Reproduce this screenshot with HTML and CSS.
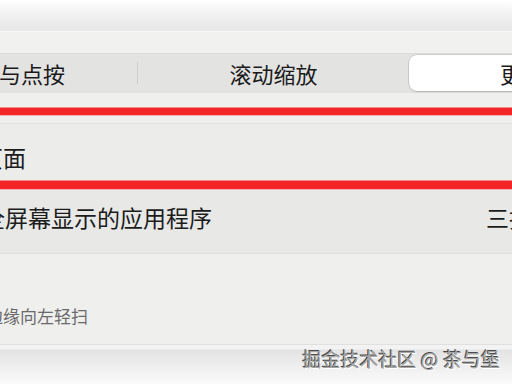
FILE: index.html
```html
<!DOCTYPE html>
<html lang="zh-CN">
<head>
<meta charset="utf-8">
<title>触控板 - 更多手势</title>
<link rel="stylesheet" href="styles.css">
</head>
<body>
<div class="screen">
  <div class="top-fade"></div>
  <div class="top-band"></div>
  <div class="segmented">
    <div class="tab tab-first">光标与点按</div>
    <div class="tab tab-mid">滚动缩放</div>
    <div class="tab tab-selected">更多手势</div>
  </div>
  <div class="gap-a"></div>
  <div class="mark"></div>
  <div class="gap-b"></div>
  <div class="row row-pages">
    <span class="label">轻扫页面</span>
  </div>
  <div class="mark mark-thick"></div>
  <div class="row row-apps">
    <span class="label">轻扫全屏幕显示的应用程序</span>
    <span class="value">三指向左或向右轻扫</span>
  </div>
  <div class="row row-edge">
    <span class="desc">从右侧边缘向左轻扫</span>
  </div>
  <div class="bottom">
    <span class="watermark">掘金技术社区 @ 茶与堡</span>
  </div>
</div>
</body>
</html>
```
FILE: styles.css
```css
html, body {
  margin: 0;
  width: 512px;
  height: 384px;
  overflow: hidden;
  background: #efefee;
}
body {
  font-family: "Noto Sans CJK SC", "Noto Sans", sans-serif;
  color: #222;
}
.screen {
  width: 512px;
  height: 384px;
  display: flex;
  flex-direction: column;
  overflow: hidden;
}
.top-fade {
  height: 31px;
  flex: none;
  background: linear-gradient(#ffffff, #f3f3f3 40%, #e6e6e6);
}
.top-band {
  height: 21px;
  flex: none;
  background: #f1f1f0;
  border-top: 1px solid #f8f8f8;
}
.segmented {
  flex: none;
  height: 36px;
  padding: 1px 0 2px;
  margin-left: -118px;
  width: 820px;
  display: flex;
  align-items: stretch;
  background: #e3e3e2;
  border-top: 1px solid #dcdcdb;
}
.tab {
  flex: none;
  font-size: 22px;
  line-height: 36px;
  text-align: center;
  color: #1a1a1a;
  position: relative;
}
.tab-first {
  width: 256px;
}
.tab-first::after {
  content: "";
  position: absolute;
  right: 0;
  top: 7px;
  width: 1px;
  height: 22px;
  background: #cdcdcc;
}
.tab-mid {
  width: 271px;
}
.tab-selected {
  width: 270px;
  background: #ffffff;
  border-radius: 8px;
  box-shadow: 0 0 0 0.5px rgba(0, 0, 0, 0.18), 0 1px 2px rgba(0, 0, 0, 0.12);
}
.gap-a {
  height: 14px;
  flex: none;
  background: #efefee;
}
.mark {
  flex: none;
  height: 7px;
  background: #f42526;
  border-top: 1px solid #f58a8a;
  border-bottom: 1px solid #f7b0b0;
}
.mark-thick {
  height: 8px;
}
.gap-b {
  height: 7px;
  flex: none;
  background: #efefee;
  border-bottom: 1px solid #e3e3e2;
}
.row {
  flex: none;
  margin-left: -64px;
  width: 900px;
  font-size: 23px;
  line-height: 23px;
}
.row-pages {
  height: 34px;
  padding-top: 22px;
  background: #ececeb;
}
.row-pages .label {
  margin-left: -2px;
}
.row-apps {
  height: 47px;
  padding-top: 16px;
  background: #e8e8e7;
  border-bottom: 1px solid #dededd;
  display: grid;
  grid-template-columns: 550px auto;
}
.label {
  color: #1c1c1c;
  white-space: nowrap;
}
.value {
  color: #1c1c1c;
  white-space: nowrap;
}
.row-edge {
  height: 90px;
  background: #efefee;
  display: flex;
  align-items: flex-end;
}
.desc {
  font-size: 17px;
  line-height: 18px;
  color: #6a6a6a;
  white-space: nowrap;
  margin: 0 0 19px -1px;
}
.bottom {
  flex: 1;
  border-top: 1px solid #e0e0df;
  background: linear-gradient(#f3f3f3 0, #f3f3f3 4px, #e3e3e3 5px, #fbfbfb 100%);
  display: flex;
  justify-content: flex-end;
  padding: 4px 12px 0 0;
}
.watermark {
  font-size: 19px;
  line-height: 20px;
  color: #a6a6a6;
  text-shadow: -1px -1px 0 #4a4a4a, 1px 1px 0 #ffffff;
  white-space: nowrap;
}
```
